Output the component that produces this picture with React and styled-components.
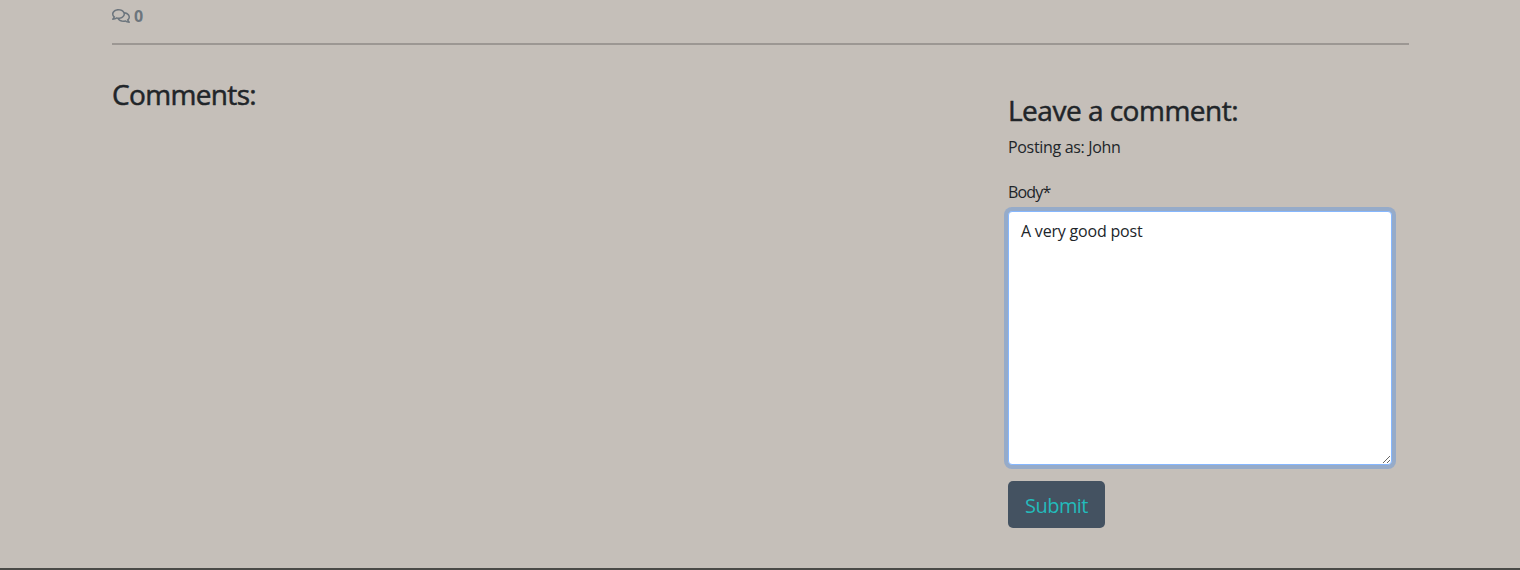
import React from "react";
import styled, { createGlobalStyle } from "styled-components";
import { FaRegComments } from "react-icons/fa";

const GlobalStyle = createGlobalStyle`
  *, *::before, *::after { box-sizing: border-box; }
  body {
    margin: 0;
    background: #c5bfb9;
    color: #212529;
    font: 400 16px/24px "Open Sans", "Noto Sans", sans-serif;
    overflow: hidden;
  }
`;

const Page = styled.main`
  display: flex;
  flex-direction: column;
  height: 570px;
  padding: 0 111px 0 112px;
  border-bottom: 2px solid #4a4a47;
`;

const CommentCount = styled.div`
  display: flex;
  align-items: center;
  gap: 4px;
  height: 24px;
  margin-top: 4px;
  color: #6c757d;
  font-weight: 700;
  svg { width: 18px; height: 16px; margin-top: -1px; }
`;

const Divider = styled.hr`
  width: 100%;
  height: 2px;
  margin: 15px 0 0;
  border: 0;
  background: #9c9793;
`;

const Columns = styled.div`
  display: grid;
  grid-template-columns: 896px 384px;
`;

const CommentList = styled.section`
  padding-top: 32px;
`;

const CommentForm = styled.form`
  display: flex;
  flex-direction: column;
  align-items: flex-start;
  padding-top: 48px;
`;

const Heading = styled.h3`
  margin: 0 0 8px;
  font-size: 28px;
  line-height: 34px;
  font-weight: 500;
  -webkit-text-stroke: 0.5px currentColor;
  white-space: nowrap;
  letter-spacing: ${(p) => p.$tracking};
`;

const Line = styled.div`
  white-space: nowrap;
  letter-spacing: ${(p) => p.$tracking};
`;

const Label = styled.label`
  margin: 21px 0 7px;
  letter-spacing: -0.8px;
`;

const TextArea = styled.textarea`
  display: block;
  width: 384px;
  height: 254px;
  padding: 7px 12px;
  border: 1px solid #86b7fe;
  border-radius: 4px;
  outline: 0;
  box-shadow: 0 0 0 4px rgba(13, 110, 253, 0.25);
  background: #fff;
  color: #212529;
  font: inherit;
  letter-spacing: -0.2px;
  resize: vertical;
`;

const SubmitButton = styled.button`
  width: 97px;
  height: 47px;
  margin-top: 16px;
  padding: 2px 0 0;
  border: 0;
  border-radius: 5px;
  background: #445261;
  color: #23bbbb;
  font: 400 20px/30px "Open Sans", "Noto Sans", sans-serif;
  letter-spacing: -0.55px;
`;

export default function App() {
  return (
    <>
      <GlobalStyle />
      <Page>
        <CommentCount>
          <FaRegComments />
          <span>0</span>
        </CommentCount>
        <Divider />
        <Columns>
          <CommentList>
            <Heading $tracking="-0.65px">Comments:</Heading>
          </CommentList>
          <CommentForm>
            <Heading $tracking="-0.5px">Leave a comment:</Heading>
            <Line $tracking="-0.32px">Posting as: John</Line>
            <Label htmlFor="body">Body*</Label>
            <TextArea id="body" defaultValue="A very good post" spellCheck={false} />
            <SubmitButton type="button">Submit</SubmitButton>
          </CommentForm>
        </Columns>
      </Page>
    </>
  );
}
